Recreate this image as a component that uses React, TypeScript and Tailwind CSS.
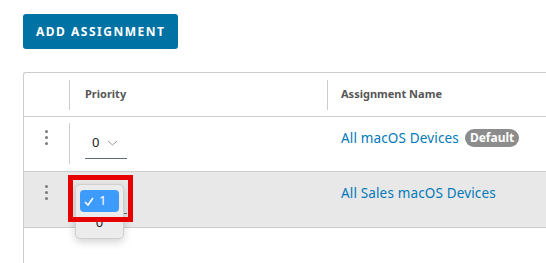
import React from 'react';

const Dots: React.FC = () => (
  <div className="flex flex-col items-center gap-[3px] pt-[13px]">
    <span className="w-[3px] h-[3px] rounded-full bg-[#7a7a7a]" />
    <span className="w-[3px] h-[3px] rounded-full bg-[#7a7a7a]" />
    <span className="w-[3px] h-[3px] rounded-full bg-[#7a7a7a]" />
  </div>
);

const PrioritySelect: React.FC<{ value: string }> = ({ value }) => (
  <div className="ml-[15px] mt-[17px] w-[42px] h-[25px] border-b border-[#5a6e73] flex items-start pl-[7px] gap-[8px]">
    <span className="text-[13px] leading-[16px] text-[#222]">{value}</span>
    <svg width="11" height="6" viewBox="0 0 11 6" className="mt-[6px]">
      <path d="M1 1l4.5 4 4.5-4" fill="none" stroke="#9a9a9a" strokeWidth="1" />
    </svg>
  </div>
);

export default function App() {
  return (
    <div
      className="relative w-[546px] h-[263px] overflow-hidden bg-white pl-[23px] pt-[14px]"
      style={{ fontFamily: '"Noto Sans", Arial, sans-serif' }}
    >
      <button className="h-[35px] px-[13px] rounded-[3px] bg-[#0072a3] text-white text-[12px] font-bold tracking-[1.5px] leading-none">
        ADD ASSIGNMENT
      </button>

      <div className="mt-[23px] border-l border-t border-[#cccccc] rounded-tl-[3px] h-[300px]">
        {/* header */}
        <div className="flex h-[44px] border-b border-[#cccccc] text-[11px] font-bold text-[#565656]">
          <div className="w-[45px]" />
          <div className="w-[258px] flex items-center">
            <div className="w-px h-[30px] bg-[#cccccc]" />
            <span className="ml-[15px]">Priority</span>
          </div>
          <div className="flex-1 flex items-center">
            <div className="w-px h-[30px] bg-[#cccccc]" />
            <span className="ml-[13px]">Assignment Name</span>
          </div>
        </div>

        {/* row 1 */}
        <div className="flex h-[55px] border-b border-[#cccccc]">
          <div className="w-[45px] flex justify-center">
            <Dots />
          </div>
          <div className="w-[258px] flex items-start">
            <div className="w-px h-[41px] mt-[6px] bg-[#cccccc]" />
            <PrioritySelect value="0" />
          </div>
          <div className="flex-1 flex items-start pt-[12px] pl-[14px] gap-[6px]">
            <span className="text-[13.5px] tracking-[0.15px] leading-[18px] text-[#0079b8]">All macOS Devices</span>
            <span className="h-[18px] px-[5px] rounded-full bg-[#8c8c8c] text-white text-[12px] font-bold leading-[18px]">
              Default
            </span>
          </div>
        </div>

        {/* row 2 */}
        <div className="flex h-[56px] border-b border-[#cccccc] bg-[#e8e8e8]">
          <div className="w-[45px] flex justify-center">
            <Dots />
          </div>
          <div className="w-[258px] flex items-start">
            <div className="w-px h-[41px] mt-[6px] bg-[#cccccc]" />
            <PrioritySelect value="1" />
          </div>
          <div className="flex-1 flex items-start pt-[12px] pl-[14px]">
            <span className="text-[13.5px] tracking-[0.15px] leading-[18px] text-[#0079b8]">All Sales macOS Devices</span>
          </div>
        </div>
      </div>

      {/* native select popup */}
      <div className="absolute left-[75px] top-[184px] w-[49px] h-[55px] rounded-[5px] bg-[#ececec] border border-[#d0d0d0] shadow-[0_3px_8px_rgba(0,0,0,0.18)] px-[4px] pt-[5px]">
        <div className="h-[22px] rounded-[4px] bg-[#3d9bfc] flex items-center pl-[4px] gap-[5px] text-white text-[13px]">
          <svg width="10" height="9" viewBox="0 0 10 9">
            <path d="M1 5l3 3 5-7" fill="none" stroke="white" strokeWidth="1.6" />
          </svg>
          <span>1</span>
        </div>
        <div className="h-[22px] flex items-center justify-center text-[13px] text-[#222]">0</div>
      </div>

      {/* highlight box */}
      <div className="absolute left-[68px] top-[175px] w-[65px] h-[47px] border-[5px] border-[#e60000]" />
    </div>
  );
}
